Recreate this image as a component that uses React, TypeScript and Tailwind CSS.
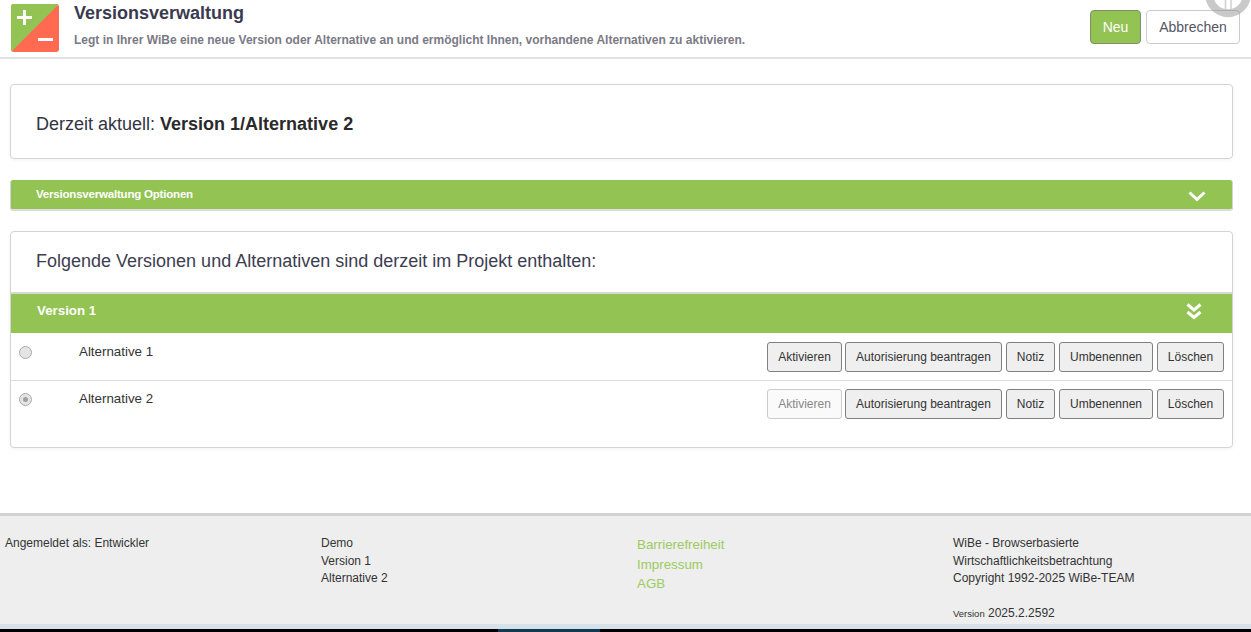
import React from "react";

const GREEN = "bg-[#92c353]";

function Btn({ children, disabled, className }: { children: React.ReactNode; disabled?: boolean; className: string }) {
  return (
    <button
      className={
        (disabled
          ? "h-[30px] rounded-[3px] border border-[#ccc] bg-[#fafafa] text-[12px] text-[#888] "
          : "h-[30px] rounded-[3px] border border-[#808080] bg-[#efefef] text-[12px] text-[#333] ") + className
      }
    >
      {children}
    </button>
  );
}

function Row({ label, checked, first }: { label: string; checked?: boolean; first?: boolean }) {
  return (
    <div className={first ? "flex h-[48px] border-b border-[#ddd]" : "flex h-[47px]"}>
      <div className={first ? "w-[68px] pl-[8px] pt-[13px] shrink-0" : "w-[68px] pl-[8px] pt-[12px] shrink-0"}>
        <div className="w-[13px] h-[13px] rounded-full border border-[#aaa] bg-[#e4e4e4] flex items-center justify-center">
          {checked && <div className="w-[5px] h-[5px] rounded-full bg-[#a0a0a0]" />}
        </div>
      </div>
      <div className={first ? "flex-1 text-[13.333px] leading-[17px] text-[#333] pt-[10px]" : "flex-1 text-[13.333px] leading-[17px] text-[#333] pt-[9px]"}>{label}</div>
      <div className={first ? "flex gap-[4px] pt-[9px] pr-[8px]" : "flex gap-[4px] pt-[8px] pr-[8px]"}>
        <Btn disabled={checked} className="w-[75px] -mr-[1px]">Aktivieren</Btn>
        <Btn className="w-[157px]">Autorisierung beantragen</Btn>
        <Btn className="w-[49px]">Notiz</Btn>
        <Btn className="w-[94px]">Umbenennen</Btn>
        <Btn className="w-[67px]">Löschen</Btn>
      </div>
    </div>
  );
}

export default function App() {
  return (
    <div className="relative h-[632px] w-full overflow-hidden bg-white font-['Liberation_Sans',Arial,sans-serif] text-[#333] flex flex-col">
      <header className="h-[59px] shrink-0 border-b-2 border-[#e2e2e2] flex pl-[11px] pr-[11px]">
        <svg width="48" height="48" viewBox="0 0 48 48" className="mt-[4px] shrink-0">
          <defs>
            <clipPath id="logo-r"><rect width="48" height="48" rx="3" /></clipPath>
          </defs>
          <g clipPath="url(#logo-r)">
            <rect width="48" height="48" fill="#ff6a50" />
            <path d="M0 48L48 0H0z" fill="#92c353" />
          </g>
          <path d="M13.500 6v15M6 13.500h15" stroke="#fff" strokeWidth="3" />
          <path d="M27 35.500h15" stroke="#fff" strokeWidth="3" />
        </svg>
        <div className="ml-[15px] flex-1">
          <div className="text-[18px] leading-[20px] font-bold text-[#3a3a4f] pt-[3px]">Versionsverwaltung</div>
          <div className="mt-[10px] text-[12px] leading-[14px] font-bold text-[#7a7a85]">
            Legt in Ihrer WiBe eine neue Version oder Alternative an und ermöglicht Ihnen, vorhandene Alternativen zu aktivieren.
          </div>
        </div>
        <div className="flex gap-[5px] pt-[10px]">
          <button className={`h-[34px] w-[51px] rounded-[4px] border border-[#7f8f6c] ${GREEN} text-[14px] text-white`}>Neu</button>
          <button className="h-[34px] w-[94px] rounded-[4px] border border-[#ccc] bg-white text-[14px] text-[#555566]">Abbrechen</button>
        </div>
      </header>

      <main className="flex-1 px-[10px] pr-[18px] pt-[25px]">
        <div className="h-[75px] rounded-[4px] border border-[#d4d4d4] bg-white shadow-[0_1px_4px_rgba(0,0,0,0.05)] pl-[25px] pt-[5px] flex items-center text-[18px] text-[#333344]">
          <span>Derzeit aktuell:&nbsp;</span>
          <b className="text-[#2a2a2a]">Version 1/Alternative 2</b>
        </div>

        <div className={`mt-[21px] h-[31px] rounded-[3px] ${GREEN} border-b-2 border-b-[#dcdcdc] border-x border-x-[#d4d4d4] flex items-center justify-between pl-[25px] pr-[26px]`}>
          <span className="text-[11.500px] tracking-[-0.2px] font-bold text-white">Versionsverwaltung Optionen</span>
          <svg width="18" height="11" viewBox="0 0 18 11" className="relative top-[2px]">
            <path d="M1.500 1.500L9 8.500l7.500-7" fill="none" stroke="#fff" strokeWidth="3" />
          </svg>
        </div>

        <div className="mt-[20px] h-[217px] rounded-[4px] border border-[#d4d4d4] bg-white shadow-[0_1px_4px_rgba(0,0,0,0.05)]">
          <div className="h-[60px] pl-[25px] pb-[2px] flex items-center text-[18px] text-[#3d3d50]">
            Folgende Versionen und Alternativen sind derzeit im Projekt enthalten:
          </div>
          <div className={`h-[41px] ${GREEN} border-t-2 border-[#d8d8d8] flex items-center justify-between pl-[26px] pr-[30px]`}>
            <span className="text-[13.333px] leading-[16px] font-bold text-white relative -top-[3px]">Version 1</span>
            <svg width="16" height="17" viewBox="0 0 16 17" className="relative -top-[2px]">
              <path d="M1.500 1.500L8 7l6.500-5.500M1.500 9L8 14.500 14.500 9" fill="none" stroke="#fff" strokeWidth="3" />
            </svg>
          </div>
          <Row label="Alternative 1" first />
          <Row label="Alternative 2" checked />
        </div>
      </main>

      <footer className="h-[116px] shrink-0 border-t-[3px] border-[#d2d2d2] bg-[#eeeeee] border-b-[5px] border-b-[#d7e1e9] text-[12px] leading-[17.500px] text-[#333] grid grid-cols-[316px_316px_316px_1fr] pt-[19px]">
        <div className="pl-[5px]">Angemeldet als: Entwickler</div>
        <div className="pl-[5px]">
          <div>Demo</div>
          <div>Version 1</div>
          <div>Alternative 2</div>
        </div>
        <div className="pl-[5px] text-[13.333px] leading-[19.500px] text-[#9ccb5f]">
          <div>Barrierefreiheit</div>
          <div>Impressum</div>
          <div>AGB</div>
        </div>
        <div className="pl-[5px]">
          <div>WiBe - Browserbasierte</div>
          <div>Wirtschaftlichkeitsbetrachtung</div>
          <div>Copyright 1992-2025 WiBe-TEAM</div>
          <div className="mt-[17px]"><span className="text-[9.500px]">Version</span> 2025.2.2592</div>
        </div>
      </footer>
      <div className="h-[3px] shrink-0 bg-black flex">
        <div className="ml-[498px] w-[102px] bg-[#103a52]" />
      </div>

      <svg width="60" height="30" viewBox="0 0 60 30" className="absolute right-0 top-0">
        <circle cx="37" cy="-5.500" r="18.700" fill="none" stroke="#888" strokeOpacity="0.45" strokeWidth="8" />
        <path d="M34.500 0v9M40 0v9" stroke="#888" strokeOpacity="0.4" strokeWidth="1.500" />
      </svg>
    </div>
  );
}
